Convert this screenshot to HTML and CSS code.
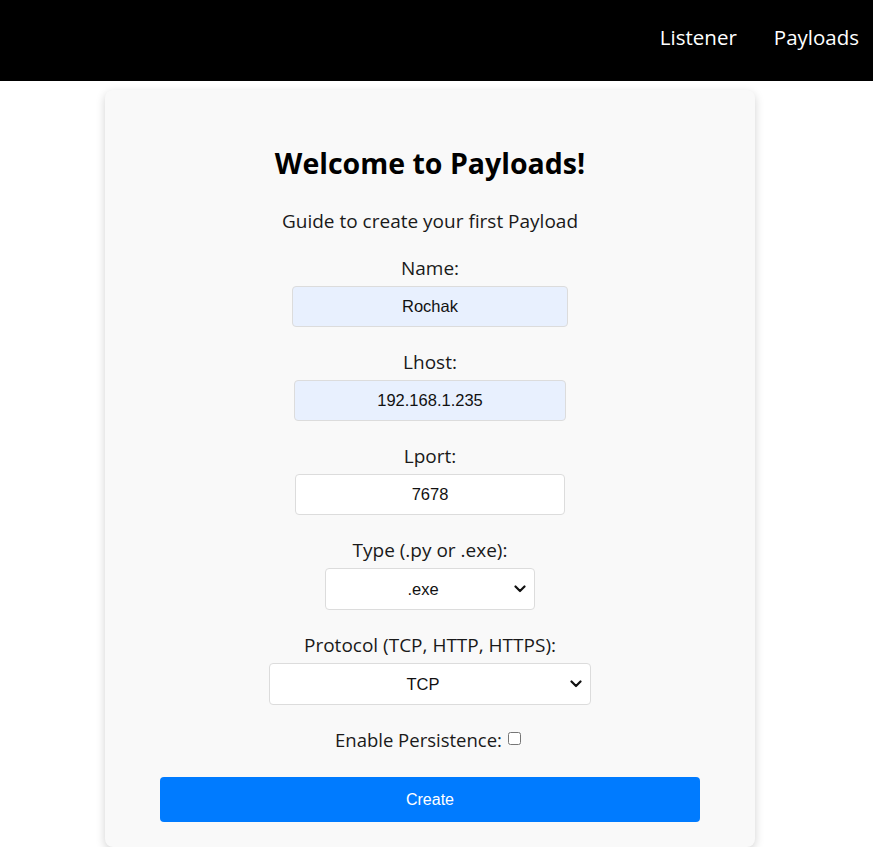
FILE: index.html
```html
<!DOCTYPE html>
<html lang="en">
<head>
<meta charset="utf-8">
<title>Payloads</title>
<link rel="stylesheet" href="styles.css">
</head>
<body>
<header class="topbar">
  <nav class="nav">
    <a class="nav-link" href="#">Listener</a>
    <a class="nav-link" href="#">Payloads</a>
  </nav>
</header>
<main class="page">
  <section class="card">
    <h2 class="title">Welcome to Payloads!</h2>
    <p class="subtitle">Guide to create your first Payload</p>
    <form class="form">
      <label class="field-label" for="name">Name:</label>
      <input class="field field-autofill field-name" id="name" type="text" value="Rochak">
      <label class="field-label" for="lhost">Lhost:</label>
      <input class="field field-autofill field-lhost" id="lhost" type="text" value="192.168.1.235">
      <label class="field-label" for="lport">Lport:</label>
      <input class="field field-lport" id="lport" type="text" value="7678">
      <label class="field-label" for="type">Type (.py or .exe):</label>
      <select class="field select select-type" id="type">
        <option>.exe</option>
        <option>.py</option>
      </select>
      <label class="field-label" for="proto">Protocol (TCP, HTTP, HTTPS):</label>
      <select class="field select select-proto" id="proto">
        <option>TCP</option>
        <option>HTTP</option>
        <option>HTTPS</option>
      </select>
      <div class="persist">
        <label class="persist-label" for="persist">Enable Persistence:</label>
        <input class="persist-box" id="persist" type="checkbox">
      </div>
      <button class="create" type="button">Create</button>
    </form>
  </section>
</main>
</body>
</html>
```
FILE: styles.css
```css
html, body {
  margin: 0;
  padding: 0;
  background: #ffffff;
}
body {
  font-family: "Open Sans", "Noto Sans", sans-serif;
  color: #111;
}
.topbar {
  background: #000;
  height: 81px;
  display: flex;
  justify-content: flex-end;
  align-items: center;
  padding-right: 14px;
}
.nav {
  display: flex;
  gap: 37px;
  margin-top: -8px;
}
.nav-link {
  color: #fff;
  text-decoration: none;
  font-size: 20.5px;
  line-height: 28px;
}
.page {
  display: flex;
  justify-content: center;
  padding-right: 13px;
  padding-top: 9px;
}
.card {
  width: 650px;
  box-sizing: border-box;
  background: #f9f9f9;
  border-radius: 8px;
  box-shadow: 0 3px 10px rgba(0, 0, 0, 0.18);
  padding: 1px 55px 25px;
  text-align: center;
}
.title {
  margin: 55px 0 0;
  font-size: 28.5px;
  line-height: 34px;
  font-weight: 700;
  color: #000;
}
.subtitle {
  margin: 29px 0 0;
  font-size: 19px;
  line-height: 24px;
  color: #1a1a1a;
}
.form {
  display: flex;
  flex-direction: column;
  align-items: center;
  margin-top: 23px;
}
.field-label {
  display: block;
  font-size: 19px;
  line-height: 24px;
  color: #1a1a1a;
  margin-bottom: 6px;
}
.field {
  box-sizing: border-box;
  height: 41px;
  margin: 0 0 23px;
  border: 1px solid #dcdcdc;
  border-radius: 4px;
  background: #fff;
  font-family: "Liberation Sans", Arial, sans-serif;
  font-size: 16.5px;
  color: #111;
  text-align: center;
  padding: 0 10px;
  outline: none;
}
.field-autofill {
  background: #e8f0fe;
}
.field-name { width: 276px; }
.field-lhost { width: 272px; }
.field-lport { width: 270px; }
.select {
  height: 42px;
  appearance: none;
  -webkit-appearance: none;
  text-align-last: center;
  background-color: #fff;
  background-image: url("data:image/svg+xml;utf8,<svg xmlns='http://www.w3.org/2000/svg' width='12' height='8' viewBox='0 0 12 8'><path d='M1.5 1.5 L6 6 L10.5 1.5' fill='none' stroke='%23111' stroke-width='2.2' stroke-linecap='round' stroke-linejoin='round'/></svg>");
  background-repeat: no-repeat;
  background-position: right 8px center;
  background-size: 12px 8px;
  padding: 0 24px 0 10px;
}
.select-type { width: 210px; }
.select-proto { width: 322px; }
.persist {
  display: flex;
  align-items: center;
  justify-content: center;
  margin-right: 4px;
}
.persist-label {
  font-size: 18.5px;
  line-height: 24px;
  color: #1a1a1a;
}
.persist-box {
  width: 13px;
  height: 13px;
  margin: 0 0 0 6px;
  position: relative;
  top: -2px;
}
.create {
  margin-top: 25px;
  width: 540px;
  height: 45px;
  border: none;
  border-radius: 4px;
  background: #007bff;
  color: #fff;
  font-family: "Liberation Sans", Arial, sans-serif;
  font-size: 16px;
  cursor: pointer;
}
```
